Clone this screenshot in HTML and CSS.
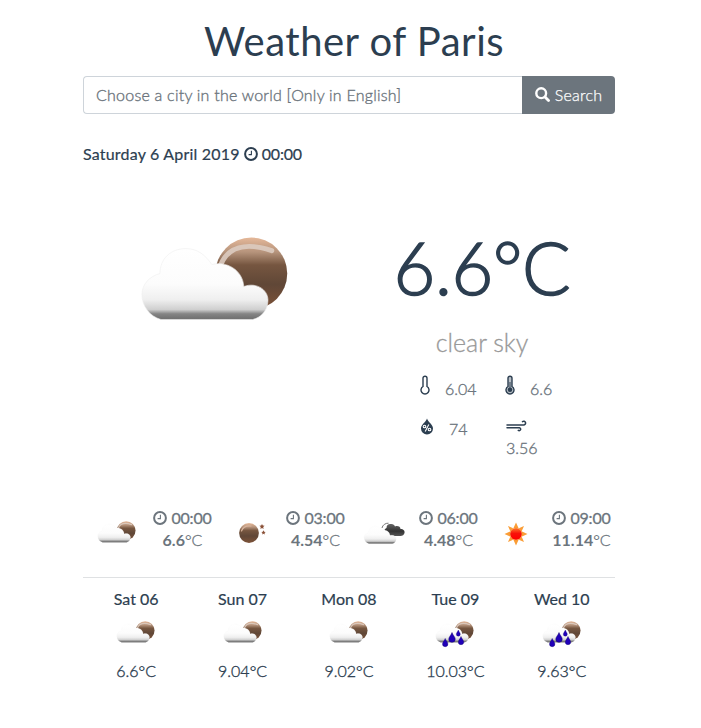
FILE: index.html
```html
<!DOCTYPE html>
<html lang="en">
<head>
<meta charset="utf-8">
<title>Weather of Paris</title>
<link rel="stylesheet" href="styles.css">
</head>
<body>
<svg class="defs" width="0" height="0" aria-hidden="true">
  <defs>
    <linearGradient id="white" x1="0" y1="0" x2="0" y2="1">
      <stop offset="0" stop-color="#fff"/><stop offset=".5" stop-color="#fcfcfc"/><stop offset=".72" stop-color="#efefef"/><stop offset=".86" stop-color="#cfcfcf"/><stop offset=".92" stop-color="#858585"/><stop offset="1" stop-color="#6c6c6c"/>
    </linearGradient>
    <linearGradient id="brown" x1="0" y1="0" x2="0" y2="1">
      <stop offset="0" stop-color="#e5b899"/><stop offset=".2" stop-color="#b6947c"/><stop offset=".38" stop-color="#765640"/><stop offset=".65" stop-color="#604737"/><stop offset="1" stop-color="#7d5238"/>
    </linearGradient>
    <linearGradient id="grey" x1="0" y1="0" x2="0" y2="1">
      <stop offset="0" stop-color="#666"/><stop offset=".6" stop-color="#333"/><stop offset="1" stop-color="#555"/>
    </linearGradient>
    <linearGradient id="red" x1="0" y1="0" x2="0" y2="1">
      <stop offset="0" stop-color="#ff7a2a"/><stop offset=".45" stop-color="#f8120a"/><stop offset="1" stop-color="#f00"/>
    </linearGradient>
    <path id="cloud" fill="url(#white)" stroke="#efefef" stroke-width=".6" d="M31 95C20 92 12 82 12 70C12 60 19 52 30 49C30 34 41 24 56 24C68 24 76 31 82 40C96 36 113 45 114 62C127 57 140 66 138 78C137 87 131 93 123 95Z"/>
    <path id="drop" fill="#2000b8" stroke="#10006c" stroke-width=".4" d="M0-4C.6-2 2.700-.2 2.700 1.500A2.700 2.700 0 0 1-2.700 1.500C-2.700-.2-.6-2 0-4Z"/>
    <path id="star" fill="#8a5037" d="M0-2.600L.8-.9 2.600-.7 1.200.6 1.600 2.400 0 1.500-1.600 2.400-1.200.6-2.600-.7-.8-.9Z"/>
    <symbol id="few" viewBox="0 0 50 50">
      <g transform="translate(2.6 9.8) scale(.26)">
        <circle cx="121.500" cy="49" r="36" fill="url(#brown)"/>
        <path d="M91 40C98 23 115 17 142 26" fill="none" stroke="#dccbc0" stroke-width="5" stroke-linecap="round" opacity=".9"/>
        <use href="#cloud"/>
      </g>
    </symbol>
    <symbol id="rain" viewBox="0 0 50 50">
      <use href="#few"/>
      <use href="#drop" x="15.200" y="34.500"/>
      <use href="#drop" transform="translate(22 29.300) scale(1.200)"/>
      <use href="#drop" transform="translate(28.300 25) scale(.75)"/>
      <use href="#drop" x="31" y="32.500"/>
    </symbol>
    <symbol id="night" viewBox="0 0 50 50">
      <circle cx="24" cy="25" r="9.900" fill="url(#brown)"/>
      <path d="M16.500 23C18 19 21 17.300 26 18" fill="none" stroke="#d9b49d" stroke-width="1.200" stroke-linecap="round"/>
      <use href="#star" x="37" y="18.500"/>
      <use href="#star" transform="translate(38.500 24.500) scale(.85)"/>
    </symbol>
    <symbol id="broken" viewBox="0 0 50 50">
      <path fill="url(#grey)" d="M27 27C25 25 26 21 28.500 20C28.500 17 30.500 15.500 33 16C35 15.800 36.500 17 37 18.500C40 17.300 42.500 19 42.500 21C45.500 21 47 23 46.500 25C46 27 44.500 28 42.500 28H35Z"/>
      <path d="M24 20C24.500 17 27.500 15 30.500 15.200" fill="none" stroke="#777" stroke-width="1"/>
      <g transform="translate(3 12.300) scale(.255 .247)"><use href="#cloud"/></g>
    </symbol>
    <symbol id="sun" viewBox="0 0 50 50">
      <path fill="#fa9d36" d="M25 14.500L27.500 20H22.500ZM25 37.500L22.500 32H27.500ZM13.500 26L19 23.500V28.500ZM36.500 26L31 28.500V23.500ZM17 18L22.200 20.200 19.300 23.200ZM33 18L30.700 23.200 27.800 20.200ZM17 34L19.300 28.800 22.200 31.800ZM33 34L27.800 31.800 30.700 28.800Z"/>
      <circle cx="25" cy="26" r="6" fill="url(#red)" stroke="#fb8a2c" stroke-width=".6"/>
    </symbol>
    <symbol id="clock" viewBox="0 0 14 14">
      <circle cx="7" cy="7" r="5.900" fill="none" stroke="currentColor" stroke-width="2"/>
      <path d="M7.400 3.800V7.600H4.600" fill="none" stroke="currentColor" stroke-width="1.100"/>
    </symbol>
  </defs>
</svg>
<main class="app">
  <h1 class="title">Weather of Paris</h1>
  <form class="search">
    <input class="city" type="text" placeholder="Choose a city in the world [Only in English]">
    <button class="go" type="button"><svg class="glass" viewBox="0 0 15 15"><circle cx="6.200" cy="6.200" r="4.900" fill="none" stroke="currentColor" stroke-width="2.400"/><path d="M10 10L13.500 13.500" stroke="currentColor" stroke-width="2.800" stroke-linecap="round"/></svg>Search</button>
  </form>
  <p class="date"><span class="day">Saturday 6 April 2019</span><svg class="clock"><use href="#clock"/></svg><span class="time">00:00</span></p>
  <section class="now">
    <svg class="big"><use href="#few"/></svg>
    <div class="info">
      <div class="temp">6.6°C</div>
      <div class="sky">clear sky</div>
      <div class="stats">
        <div class="stat"><svg class="thermo" viewBox="0 0 10 20"><path d="M3 11.500V3.200A2 2 0 0 1 7 3.200V11.500A4 4 0 1 1 3 11.500Z" fill="none" stroke="currentColor" stroke-width="1.400"/></svg>6.04</div>
        <div class="stat"><svg class="thermo" viewBox="0 0 10 20"><path d="M3 11.500V3.200A2 2 0 0 1 7 3.200V11.500A4 4 0 1 1 3 11.500Z" fill="#b9c0c7" stroke="currentColor" stroke-width="1.400"/><path d="M5 7V14" stroke="currentColor" stroke-width="1"/><circle cx="5" cy="14.700" r="2.300" fill="currentColor"/></svg>6.6</div>
        <div class="stat"><svg class="humid" viewBox="0 0 14 17"><path d="M7 .5C8 4 13 6.500 13 10.500A6 6 0 0 1 1 10.500C1 6.500 6 4 7 .5Z" fill="currentColor"/><g fill="none" stroke="#fff" stroke-width="1.100"><path d="M8.800 6.500L5.200 13.500"/><circle cx="4.500" cy="8.500" r="1.300"/><circle cx="9.500" cy="11.500" r="1.300"/></g></svg>74</div>
        <div class="stat wide"><svg class="wind" viewBox="0 0 21 12"><path d="M1 5H17.500A1.900 1.900 0 1 0 16.500 1.600M1 7.700H13.500A1.500 1.500 0 1 1 12.300 10.400" fill="none" stroke="currentColor" stroke-width="1.500" stroke-linecap="round"/></svg>3.56</div>
      </div>
    </div>
  </section>
  <section class="hours">
    <div class="hour"><svg class="icon"><use href="#few"/></svg><div class="when"><div><svg class="clock"><use href="#clock"/></svg><span class="time">00:00</span></div><div><b>6.6</b>°C</div></div></div>
    <div class="hour"><svg class="icon"><use href="#night"/></svg><div class="when"><div><svg class="clock"><use href="#clock"/></svg><span class="time">03:00</span></div><div><b>4.54</b>°C</div></div></div>
    <div class="hour"><svg class="icon"><use href="#broken"/></svg><div class="when"><div><svg class="clock"><use href="#clock"/></svg><span class="time">06:00</span></div><div><b>4.48</b>°C</div></div></div>
    <div class="hour"><svg class="icon"><use href="#sun"/></svg><div class="when"><div><svg class="clock"><use href="#clock"/></svg><span class="time">09:00</span></div><div><b>11.14</b>°C</div></div></div>
  </section>
  <section class="days">
    <div class="col"><div class="name">Sat 06</div><svg class="icon"><use href="#few"/></svg><div class="deg">6.6°C</div></div>
    <div class="col"><div class="name">Sun 07</div><svg class="icon"><use href="#few"/></svg><div class="deg">9.04°C</div></div>
    <div class="col"><div class="name">Mon 08</div><svg class="icon"><use href="#few"/></svg><div class="deg">9.02°C</div></div>
    <div class="col"><div class="name">Tue 09</div><svg class="icon"><use href="#rain"/></svg><div class="deg">10.03°C</div></div>
    <div class="col"><div class="name">Wed 10</div><svg class="icon"><use href="#rain"/></svg><div class="deg">9.63°C</div></div>
  </section>
</main>
</body>
</html>
```
FILE: styles.css
```css
* { box-sizing: border-box; }
body {
  margin: 0;
  background: #fff;
  color: #2c3e50;
  font: 400 16px/24px Lato, "Open Sans", sans-serif;
}
svg { display: block; flex: none; }
.defs { position: absolute; }
.app { width: 532px; margin-left: 83px; padding-top: 17px; }
.title {
  margin: 0 0 11px;
  padding-left: 10px;
  font-size: 40px;
  font-weight: 400;
  line-height: 48px;
  letter-spacing: .5px;
  text-align: center;
}
.search { display: flex; height: 38px; margin: 0; }
.city {
  flex: 1;
  min-width: 0;
  padding: 0 12px 2px;
  border: 1px solid #ced4da;
  border-right: 0;
  border-radius: 4px 0 0 4px;
  font: 300 16px Lato, sans-serif;
  letter-spacing: .23px;
}
.city::placeholder { color: #6c757d; opacity: 1; -webkit-text-stroke: .35px #6c757d; }
.go {
  display: flex;
  align-items: center;
  justify-content: center;
  gap: 5px;
  width: 93px;
  padding: 0 0 2px;
  border: 0;
  border-radius: 0 4px 4px 0;
  background: #6c757d;
  color: #fff;
  font: 300 16px Lato, sans-serif;
  letter-spacing: .25px;
  -webkit-text-stroke: .25px #fff;
}
.glass { width: 15px; height: 15px; margin-top: 1px; }
.date { display: flex; align-items: center; margin: 28px 0 0; -webkit-text-stroke: .2px #2c3e50; }
.day { letter-spacing: .2px; }
.clock { width: 14px; height: 14px; margin: 0 4px; }
.time { letter-spacing: -.2px; }
.now { display: grid; grid-template-columns: 1fr 1fr; height: 341px; }
.big { width: 192px; height: 192px; margin: 21px auto 0; filter: blur(.7px); }
.info { padding-top: 58px; text-align: center; font-weight: 300; }
.temp { font-size: 72px; line-height: 86px; letter-spacing: -.4px; -webkit-text-stroke: 1.5px #2c3e50; }
.sky { margin-top: 17px; font-size: 25px; line-height: 30px; color: #999; -webkit-text-stroke: .3px #999; }
.stats {
  display: grid;
  grid-template-columns: 85px 60px;
  grid-template-rows: 40px 40px;
  margin: 20px 0 0 71px;
  color: #6c757d;
  text-align: left;
}
.stat { display: flex; line-height: 24px; -webkit-text-stroke: .35px #6c757d; }
.stat svg { color: #2c3e50; }
.thermo { width: 10px; height: 20px; margin: -2px 15px 0 0; }
.humid { width: 14px; height: 17px; margin: 1px 15px 0 0; }
.wide { display: block; padding: 3px 0 0 1px; line-height: 20px; }
.wind { width: 21px; height: 12px; margin-bottom: 6px; }
.hours {
  display: grid;
  grid-template-columns: repeat(4, 1fr);
  height: 71px;
  border-bottom: 1px solid #dfe1e3;
  color: #6c757d;
}
.hour { display: flex; padding-left: 9px; }
.icon { width: 50px; height: 50px; }
.hour .icon { margin-top: 1px; }
.when {
  flex: 1;
  padding-left: 7px;
  font-weight: 300;
  line-height: 22px;
  text-align: center;
  -webkit-text-stroke: .3px #6c757d;
}
.when > div:first-child {
  display: flex;
  align-items: center;
  justify-content: center;
  padding-right: 4px;
  font-weight: 400;
}
.when b { font-weight: 700; -webkit-text-stroke: 0; }
.days { display: grid; grid-template-columns: repeat(5, 1fr); padding-top: 9px; text-align: center; }
.name { -webkit-text-stroke: .2px #2c3e50; }
.col .icon { margin: -3px auto 1px; }
.deg { font-weight: 300; -webkit-text-stroke: .35px #2c3e50; }
```
